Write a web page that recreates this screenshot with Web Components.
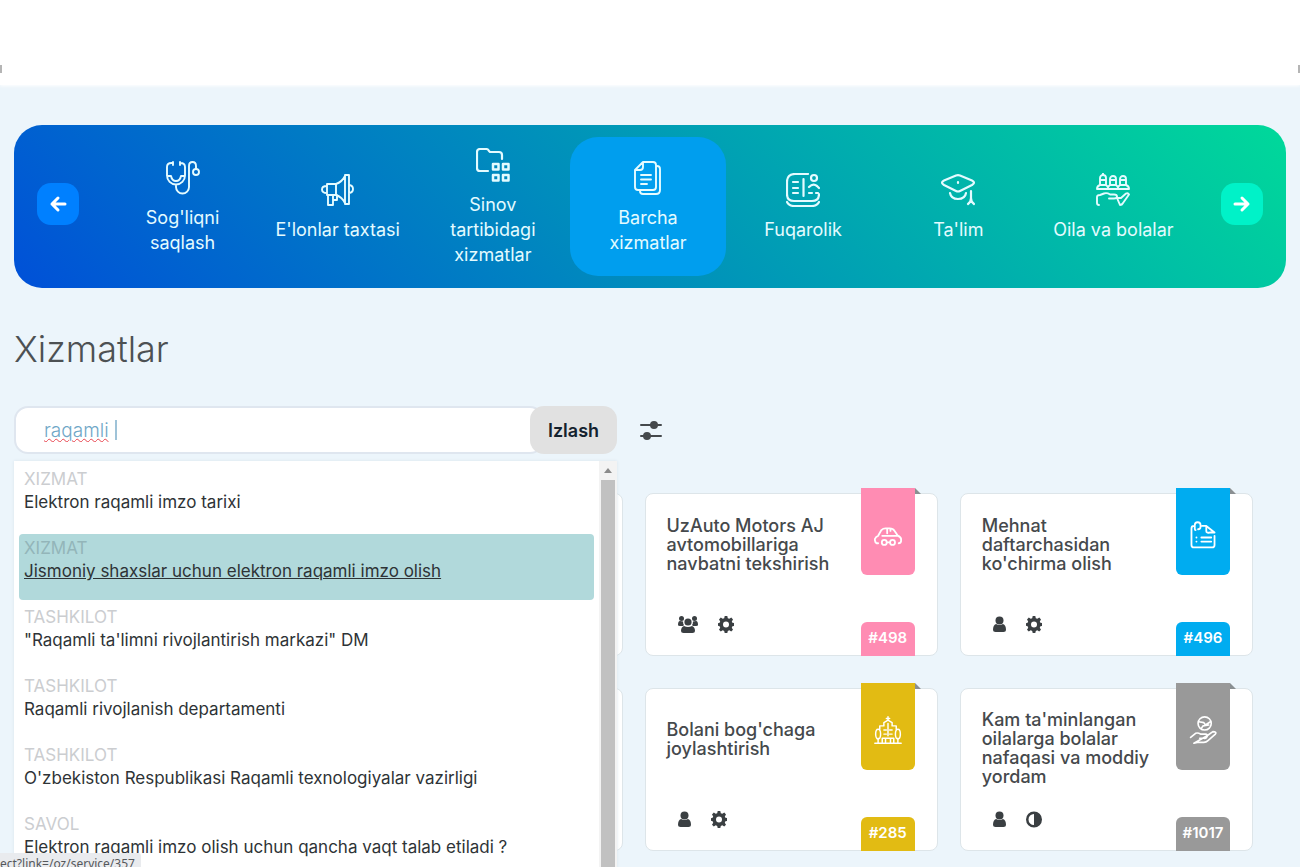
<!DOCTYPE html>
<html lang="uz">
<head>
<meta charset="utf-8">
<title>Xizmatlar</title>
<style>
  html { height: 100%; }
  body { margin: 0; height: 100%; overflow: hidden; background: #ecf5fb; color: #3f4448; font-family: Inter, "Open Sans", sans-serif; font-size: 18px; }
</style>
</head>
<body>
<portal-page>
  <category-nav slot="nav">
    <category-item icon="health">Sog'liqni saqlash</category-item>
    <category-item icon="horn">E'lonlar taxtasi</category-item>
    <category-item icon="trial">Sinov tartibidagi xizmatlar</category-item>
    <category-item icon="docs" active>Barcha xizmatlar</category-item>
    <category-item icon="citizen">Fuqarolik</category-item>
    <category-item icon="cap">Ta'lim</category-item>
    <category-item icon="family">Oila va bolalar</category-item>
  </category-nav>
  <service-search slot="search" value="raqamli">
    <search-hit kind="XIZMAT">Elektron raqamli imzo tarixi</search-hit>
    <search-hit kind="XIZMAT" active>Jismoniy shaxslar uchun elektron raqamli imzo olish</search-hit>
    <search-hit kind="TASHKILOT">"Raqamli ta'limni rivojlantirish markazi" DM</search-hit>
    <search-hit kind="TASHKILOT">Raqamli rivojlanish departamenti</search-hit>
    <search-hit kind="TASHKILOT">O'zbekiston Respublikasi Raqamli texnologiyalar vazirligi</search-hit>
    <search-hit kind="SAVOL">Elektron raqamli imzo olish uchun qancha vaqt talab etiladi ?</search-hit>
  </service-search>
  <service-card blank></service-card>
  <service-card number="#498" color="#ff8cb3" icon="car" marks="users gear">UzAuto Motors AJ avtomobillariga navbatni tekshirish</service-card>
  <service-card number="#496" color="#00acf0" icon="note" marks="user gear">Mehnat daftarchasidan ko'chirma olish</service-card>
  <service-card blank></service-card>
  <service-card number="#285" color="#e2bb13" icon="building" marks="user gear">Bolani bog'chaga joylashtirish</service-card>
  <service-card number="#1017" color="#999999" icon="aid" marks="user half">Kam ta'minlangan oilalarga bolalar nafaqasi va moddiy yordam</service-card>
  <link-status slot="status">ect?link=/oz/service/357</link-status>
</portal-page>

<script>
const line = (inner, w = 2) => `<svg viewBox="0 0 34 34" fill="none" stroke="currentColor" stroke-width="${w}" stroke-linecap="round" stroke-linejoin="round" aria-hidden="true">${inner}</svg>`;
const solid = (box, inner) => `<svg viewBox="0 0 ${box} 17" width="${box}" height="17" fill="currentColor" aria-hidden="true">${inner}</svg>`;
const ICONS = {
  health: line('<path d="M7 2H5.500Q1 2 1 6v8.500a9 9 0 0 0 18 0V6q0-4-4.500-4H14M7 1v3M14 1v3M1 15h4q1 5 5 5t5-5h4M10 23.500V26a6.500 6.500 0 0 0 13 0V5q0-4 3.500-4T30 5v3"/><circle cx="30" cy="11" r="3"/>', 1.9),
  horn: line('<path d="M6 11h9v11H6zM15 11q6-2 9-8v27q-3-6-9-8M24 2h4v29h-4zM6 13q-5 0-5 3.500T6 20M28 12q4 .500 4 4t-4 4M7 22v10h5V22M12 27h4v-5"/>', 1.9),
  trial: line('<path d="M12 23H4q-3 0-3-3V4q0-3 3-3h6q2 0 3 2l1 1h9q3 0 3 3v4" stroke-width="2.200"/><path d="M17 16h5.500v5.500H17zM27 16h5.500v5.500H27zM17 27h5.500v5.500H17zM27 27h5.500v5.500H27z" stroke-width="2.500"/>'),
  docs: line('<path d="M12 1h10q3 0 3 3v22q0 3-3 3H7q-3 0-3-3V9zM12 1v5q0 3-3 3H4M25 5h1q3 0 3 3v21q0 4-4 4H12q-3 0-3-3M10 14h10M10 18.500h10M10 23h6"/>', 1.9),
  citizen: line('<path d="M22 1H9Q1 1 1 9v12q0 7 7 7h18q7 0 7-7M1 29q2 4 7 4h18q5 0 7-4M7 9h5M7 15h5M7 20h5M17.500 6v17M23 20h3M30 20h2M23 14q4-4 8-1l2 2"/><circle cx="28" cy="5" r="3"/>', 2.200),
  cap: line('<path d="M15 2.500q2-.800 4 0l12 5q4 2 0 4.500l-12 6q-2 1-4 0l-12-6q-4-2.500 0-4.500zM9 20q1 6 8 6t8-6M30 18v8M30 25q0 4-3 6M30 25q0 4 3 6M17 9v1"/>', 2.200),
  family: line('<path d="M1 16h32M1 16q0-3 3-4V5a3 3 0 0 1 6 0v7q1.500 1 2 2.500.500-1.500 2-2.500V6a3 3 0 0 1 6 0v6q1.500 1 2 2.500.500-1.500 2-2.500V6a3 3 0 0 1 6 0v6q3 1 3 4M4 7h6M14 7h6M24 7h6M5 12h4M15 12h4M25 12h4M7 1V.500M3 32q-2 0-2-2v-6q0-2 3-2l4-1.500q3-1 6 1h4q3 0 3 2t-3 2h-5M21 25h4l5-4.500q2-1 3 1L27 30q-1 2-3 2z"/>', 1.9),
  car: line('<path d="M5 27H3q-2-1-2-5 1-3 4-4l4-7q2-2 5-2h5q4 0 6 3l4 6q4 1 4 5t-3 4M10 18h20M16 10v5M20 10v2M16 26h3"/><circle cx="12.500" cy="26" r="3"/><circle cx="22.500" cy="26" r="3"/>', 2.200),
  note: line('<path d="M7 6H6Q3 6 3 9v20q0 3 3 3h22q3 0 3-3V18M31 14L21 6h-5M21 6v6q0 3 4 2h6M15 20h12M15 25h12M9 20h.100M9 25h.100M8 11q-1 0-1-2V5a3.500 3.500 0 1 1 7 0v2q0 3-3 3"/>', 2.200),
  building: line('<path d="M1 33h32M5 32V27M29 32V27M7 16v-4h5V8l5-3 5 3v4h5v4M17 5V1M15 3h4M10 32v-5h14v5M14 32v-4M20 32v-4M12 17h3M19 17h3M12 22h3M19 22h3M17 9v15"/><ellipse cx="5" cy="22" rx="3" ry="6"/><ellipse cx="29" cy="22" rx="3" ry="6"/>', 1.8),
  aid: line('<circle cx="19" cy="9" r="8"/><path d="M12 7l6 1 2 3 6-4M15 15l2-3 7-1M2 26l6-5q3-1 6 1h6q3 0 2 3t-4 2h-5M22 24l7-5q5 0 3 3l-9 8q-2 2-5 2h-8l-4 1z"/>', 2),
  user: solid(13, '<circle cx="6.500" cy="4.500" r="4"/><path d="M3 8Q0 9 0 14q0 2 2.500 2h8Q13 16 13 14q0-5-3-6-3.500 2-7 0z"/>'),
  users: solid(20, '<circle cx="3.500" cy="2.500" r="2.500"/><circle cx="16.500" cy="2.500" r="2.500"/><circle cx="10" cy="6" r="3.600"/><path d="M0 9q0-4 2-4l3 .500Q5 8 6 9l-1 1H2Q0 10 0 9zM20 9q0-4-2-4l-3 .500Q15 8 14 9l1 1h3q2 0 2-1zM6 10q4 2 8 0 3 1 3 5 0 2-2.500 2h-9Q3 17 3 15q0-4 3-5z"/>'),
  gear: solid(16, '<path fill-rule="evenodd" d="M6.700 0h2.600l.500 2.200 1.500.600 2-1.200 1.700 1.800-1.200 2 .600 1.400 2.100.400v2.600l-2.100.500-.600 1.400 1.200 2-1.800 1.800-1.900-1.200-1.500.600-.500 2.100H6.700l-.500-2.100-1.500-.600-1.900 1.200L1 13.700l1.200-2-.600-1.400L0 9.800V7.200l1.600-.400.600-1.400L1 3.400l1.800-1.800 1.900 1.200 1.500-.600zM8 5.500a3 3 0 1 0 0 6 3 3 0 0 0 0-6z"/>'),
  half: solid(16, '<path fill-rule="evenodd" d="M8 .500a8 8 0 1 0 0 16 8 8 0 0 0 0-16zM8 3v11A5.500 5.500 0 0 1 8 3z"/>')
};

class Base extends HTMLElement {
  connectedCallback() {
    if (this.shadowRoot) return;
    this.attachShadow({ mode: 'open' }).innerHTML = this.render();
  }
  attr(name) { return this.getAttribute(name) || ''; }
}

customElements.define('portal-page', class extends Base {
  render() {
    return `<style>
      :host { display: block; min-height: 100%; }
      header { display: flex; justify-content: space-between; align-items: flex-end; box-sizing: border-box; height: 85px; padding-bottom: 12px; background: #fff; box-shadow: 0 1px 3px #fff; }
      header i { width: 2px; height: 8px; background: #b5b5b5; }
      main { padding: 40px 14px 0; }
      h1 { margin: 40px 0 36px; font-size: 36px; line-height: 42px; font-weight: 300; color: #4d5153; }
      .grid { display: grid; grid-template-columns: repeat(4, 1fr); gap: 32px 22px; margin: 39px 33px 0 0; }
      ::slotted(service-card[blank]) { grid-column: 2; }
    </style>
    <header><i></i><i></i></header>
    <main>
      <slot name="nav"></slot>
      <h1>Xizmatlar</h1>
      <slot name="search"></slot>
      <section class="grid"><slot></slot></section>
    </main>
    <slot name="status"></slot>`;
  }
});

customElements.define('category-nav', class extends Base {
  render() {
    const arrow = (d) => `<svg viewBox="0 0 18 18" width="18" height="18" fill="none" stroke="#fff" stroke-width="3" stroke-linecap="round" stroke-linejoin="round" aria-hidden="true"><path d="${d}"/></svg>`;
    return `<style>
      :host { display: block; }
      nav { display: flex; align-items: center; box-sizing: border-box; height: 163px; padding: 0 23px; border-radius: 28px; background: linear-gradient(45deg, #0050d8, #00d99a); }
      button { display: grid; place-items: center; flex: none; width: 42px; height: 42px; margin-top: -6px; padding: 0; border: 0; border-radius: 14px; background: #0080ff; }
      button.next { background: #00f2c8; }
      .track { display: flex; flex: 1; min-width: 0; margin: 0 30px 0 26px; }
    </style>
    <nav aria-label="Kategoriyalar">
      <button aria-label="Oldingi">${arrow('M16 9H3M9 3L3 9l6 6')}</button>
      <div class="track"><slot></slot></div>
      <button class="next" aria-label="Keyingi">${arrow('M2 9h13M9 3l6 6-6 6')}</button>
    </nav>`;
  }
});

customElements.define('category-item', class extends Base {
  render() {
    return `<style>
      :host { display: block; flex: 1 1 0; min-width: 0; }
      a { display: flex; flex-direction: column; align-items: center; justify-content: center; gap: 10px; box-sizing: border-box; height: 139px; padding: 2px 12px 0; border-radius: 28px; color: #e4fbff; text-align: center; text-decoration: none; line-height: 25px; }
      :host([active]) a { background: #009eee; padding: 2px 26px 0; }
      svg { flex: none; width: 34px; height: 34px; }
    </style>
    <a href="#">${ICONS[this.attr('icon')]}<span><slot></slot></span></a>`;
  }
});

customElements.define('service-search', class extends Base {
  render() {
    return `<style>
      :host { display: block; position: relative; z-index: 2; }
      form { display: flex; align-items: center; gap: 22px; }
      .field { position: relative; display: flex; width: 603px; }
      input { flex: 1; min-width: 0; height: 48px; box-sizing: border-box; margin-right: -14px; padding: 0 28px; border: 2px solid #dfe6ef; border-radius: 14px; background: #fff; font: 300 19px Inter, sans-serif; color: #6fa7c7; outline: 0; text-decoration: underline wavy #e8454f 1px; }
      .caret { position: absolute; left: 101px; top: 14px; width: 2px; height: 20px; background: #9fc3d8; }
      .go { position: relative; width: 87px; height: 48px; padding: 0; border: 0; border-radius: 14px; background: #e1e1e1; font: 600 18px Inter, sans-serif; color: #14222e; }
      .filter { display: grid; padding: 0; border: 0; background: none; color: #45494c; }
      .menu { position: absolute; top: 55px; left: 0; display: flex; width: 603px; background: #fff; box-shadow: 0 0 3px #d9e4ec; }
      .hits { display: flex; flex-direction: column; gap: 3px; flex: 1; min-width: 0; padding: 4px 5px; }
      .bar { display: flex; flex-direction: column; align-items: center; width: 18px; background: #f3f3f3; }
      .bar svg { margin: 7px 0; }
      .thumb { flex: 1; width: 14px; background: #c1c1c1; }
    </style>
    <form role="search">
      <div class="field">
        <input type="text" aria-label="Qidiruv" value="${this.attr('value')}" spellcheck="false">
        <span class="caret"></span>
        <button class="go" type="button">Izlash</button>
      </div>
      <button class="filter" type="button" aria-label="Filtr"><svg width="24" height="24" viewBox="0 0 24 24" fill="currentColor" stroke="currentColor" stroke-width="2" stroke-linecap="round" aria-hidden="true"><path d="M2 7h20M2 18h20"/><circle cx="15" cy="7" r="3"/><circle cx="8" cy="18" r="3"/></svg></button>
    </form>
    <div class="menu">
      <div class="hits"><slot></slot></div>
      <div class="bar"><svg width="8" height="5" viewBox="0 0 8 5" fill="#8b8b8b" aria-hidden="true"><path d="M0 5l4-5 4 5z"/></svg><div class="thumb"></div></div>
    </div>`;
  }
});

customElements.define('search-hit', class extends Base {
  render() {
    return `<style>
      :host { display: block; }
      a { display: block; box-sizing: border-box; height: 66px; padding: 3px 5px 0; border-radius: 4px; color: #2e3336; font-size: 17px; line-height: 23px; text-decoration: none; white-space: nowrap; }
      small { display: block; font-size: 17px; color: #cbcdd0; }
      :host([active]) a { background: #b1d9db; }
      :host([active]) small { color: #93b5b9; }
      :host([active]) span { text-decoration: underline; }
    </style>
    <a href="#"><small>${this.attr('kind')}</small><span><slot></slot></span></a>`;
  }
});

customElements.define('service-card', class extends Base {
  render() {
    const blank = this.hasAttribute('blank');
    const marks = this.attr('marks').split(' ').filter(Boolean).map((m) => ICONS[m]).join('');
    return `<style>
      :host { display: block; min-width: 0; }
      article { position: relative; display: flex; flex-direction: column; justify-content: space-between; box-sizing: border-box; height: 163px; padding: 21px 80px 22px 21px; border: 1px solid #dde5e9; border-radius: 8px; background: #fff; }
      h2 { display: flex; align-items: center; min-height: 58px; margin: 0; font-size: 18px; line-height: 19px; font-weight: 500; color: #45494c; }
      .marks { display: flex; align-items: center; gap: 20px; padding-left: 11px; color: #3a3f42; }
      .ribbon, .number { position: absolute; right: 22px; width: 54px; display: grid; place-items: center; background: ${this.attr('color')}; color: #fff; }
      .ribbon { top: -6px; height: 87px; border-radius: 0 0 6px 6px; padding-top: 6px; box-sizing: border-box; }
      .ribbon::after { content: ""; position: absolute; left: 100%; top: 0; border: 3px solid transparent; border-left-color: #8a8f92; border-bottom-color: #8a8f92; }
      .ribbon svg { width: 28px; height: 28px; }
      .number { bottom: -1px; height: 34px; box-sizing: border-box; padding-bottom: 2px; border-radius: 6px 6px 0 0; font-size: 15px; line-height: 20px; font-weight: 600; }
    </style>
    <article>${blank ? '' : `<h2><span><slot></slot></span></h2><div class="marks">${marks}</div>
      <div class="ribbon">${ICONS[this.attr('icon')]}</div><div class="number">${this.attr('number')}</div>`}</article>`;
  }
});

customElements.define('link-status', class extends Base {
  render() {
    return `<style>
      :host { position: fixed; left: 0; bottom: 0; z-index: 3; box-sizing: border-box; height: 14px; padding: 1px 6px 0 0; overflow: hidden; border-radius: 0 3px 0 0; background: #e9ebee; color: #55585b; font: 12px/20px "Noto Sans", sans-serif; white-space: nowrap; }
    </style><slot></slot>`;
  }
});
</script>
</body>
</html>
